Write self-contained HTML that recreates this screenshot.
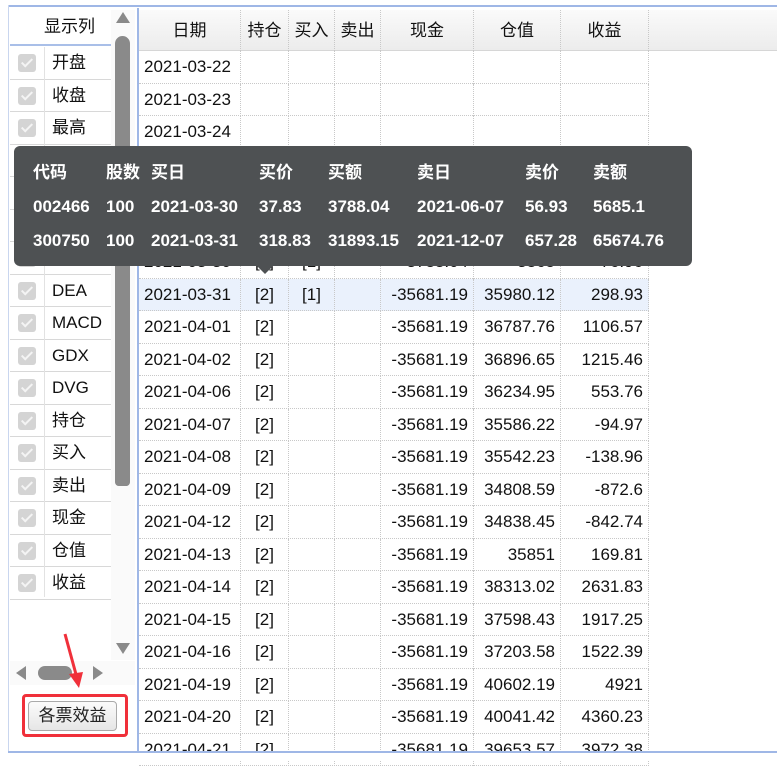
<!DOCTYPE html>
<html><head><meta charset="utf-8"><style>
*{box-sizing:border-box;margin:0;padding:0}
body{width:777px;height:760px;overflow:hidden;background:#fff;font-family:"Liberation Sans","Noto Sans CJK SC",sans-serif;font-size:17px;color:#111;position:relative}
.abs{position:absolute}
.hdr{position:absolute;top:10px;left:139px;width:638px;height:41px;background:linear-gradient(#fafafa,#ececec);border-bottom:1px solid #d6d6d6}
.hc{position:absolute;top:10px;height:41px;line-height:41px;text-align:center;border-right:1px dotted #c8c8c8}
.row{position:absolute;left:139px;width:510px;height:32.5px;border-bottom:1px dotted #c8c8c8}
.c{position:absolute;top:0;height:32.5px;line-height:32px;border-right:1px dotted #c8c8c8;white-space:nowrap;padding:0 5px}
.r{text-align:right}.m{text-align:center}
.lr{position:absolute;left:10px;width:101px;height:32.5px;border-bottom:1px solid #d8d8d8}
.cb{position:absolute;left:8px;top:7px;width:18px;height:18px;background:#d4d4d4;border-radius:3px}
.cb:after{content:"";position:absolute;left:6px;top:2px;width:4px;height:9px;border:solid #f4f4f4;border-width:0 2px 2px 0;transform:rotate(45deg)}
.lt{position:absolute;left:42px;top:0;line-height:32px}
.tip{position:absolute;left:14px;top:146px;width:678px;height:120px;background:#4e5153;border-radius:6px;color:#fff;font-weight:bold;font-size:17px}
.tip span{position:absolute;white-space:nowrap;line-height:20px;height:20px}
</style></head><body>
<div class="abs" style="left:8px;top:5px;width:769px;height:2px;background:#9fb7e6"></div>
<div class="abs" style="left:137px;top:8px;width:2px;height:746px;background:#9fb7e6"></div>
<div class="abs" style="left:8px;top:5px;width:1px;height:748px;background:#c9d6ef"></div>

<div class="hdr"></div>
<div class="hc" style="left:139px;width:102px">日期</div>
<div class="hc" style="left:241px;width:48px">持仓</div>
<div class="hc" style="left:289px;width:46px">买入</div>
<div class="hc" style="left:335px;width:46px">卖出</div>
<div class="hc" style="left:381px;width:93px">现金</div>
<div class="hc" style="left:474px;width:87px">仓值</div>
<div class="hc" style="left:561px;width:88px">收益</div>

<div id="rows"></div>
<script>
var d=[["2021-03-22"],["2021-03-23"],["2021-03-24"],["2021-03-25"],["2021-03-26"],["2021-03-29"],["2021-03-30","[2]","[1]","","-3788.04","3865","76.96"],["2021-03-31","[2]","[1]","","-35681.19","35980.12","298.93"],
["2021-04-01","[2]","","","-35681.19","36787.76","1106.57"],["2021-04-02","[2]","","","-35681.19","36896.65","1215.46"],["2021-04-06","[2]","","","-35681.19","36234.95","553.76"],["2021-04-07","[2]","","","-35681.19","35586.22","-94.97"],["2021-04-08","[2]","","","-35681.19","35542.23","-138.96"],["2021-04-09","[2]","","","-35681.19","34808.59","-872.6"],["2021-04-12","[2]","","","-35681.19","34838.45","-842.74"],["2021-04-13","[2]","","","-35681.19","35851","169.81"],["2021-04-14","[2]","","","-35681.19","38313.02","2631.83"],["2021-04-15","[2]","","","-35681.19","37598.43","1917.25"],["2021-04-16","[2]","","","-35681.19","37203.58","1522.39"],["2021-04-19","[2]","","","-35681.19","40602.19","4921"],["2021-04-20","[2]","","","-35681.19","40041.42","4360.23"],["2021-04-21","[2]","","","-35681.19","39653.57","3972.38"]];
var cols=[[0,102,""],[102,48,"m"],[150,46,"m"],[196,46,"m"],[242,93,"r"],[335,87,"r"],[422,88,"r"]];
var h="";
for(var i=0;i<d.length;i++){var t=51+i*32.5;if(t>752)break;
h+='<div class="row" style="top:'+t+'px;'+(i==7?'background:#eaf1fc':'')+'">';
for(var j=0;j<7;j++){h+='<div class="c '+cols[j][2]+'" style="left:'+cols[j][0]+'px;width:'+cols[j][1]+'px">'+(d[i][j]||"")+'</div>';}
h+='</div>';}
document.getElementById("rows").innerHTML=h;
</script>
<div class="abs" style="left:0;top:753px;width:777px;height:7px;background:#fff"></div>
<div class="abs" style="left:8px;top:751px;width:769px;height:2px;background:#9fb7e6"></div>

<!-- left panel -->
<div class="abs" style="left:9px;top:8px;width:128px;height:743px;background:#fff"></div>
<div class="abs" style="left:10px;top:10px;width:101px;height:36px;line-height:34px;border-bottom:2px solid #a9bfe8"><span style="position:absolute;left:34px">显示列</span></div>
<div id="lp"></div>
<script>
var n=["开盘","收盘","最高","最低","成交量","MA","DIF","DEA","MACD","GDX","DVG","持仓","买入","卖出","现金","仓值","收益"];var s="";
for(var i=0;i<n.length;i++){s+='<div class="lr" style="top:'+(47+i*32.5)+'px"><div class="cb"></div><div class="lt">'+n[i]+'</div></div>';}
document.getElementById("lp").innerHTML=s;
</script>
<div class="abs" style="left:44px;top:47px;width:1px;height:550px;background:#e2e2e2"></div>
<div class="abs" style="left:111px;top:10px;width:24px;height:650px;background:#fafafa"></div>
<div class="abs" style="left:116px;top:12px;width:0;height:0;border-left:7px solid transparent;border-right:7px solid transparent;border-bottom:11px solid #8a8a8a"></div>
<div class="abs" style="left:115px;top:36px;width:15px;height:450px;background:#8a8a8a;border-radius:8px 8px 4px 4px"></div>
<div class="abs" style="left:116px;top:643px;width:0;height:0;border-left:7px solid transparent;border-right:7px solid transparent;border-top:11px solid #8a8a8a"></div>
<div class="abs" style="left:10px;top:661px;width:125px;height:24px;background:#fafafa"></div>
<div class="abs" style="left:16px;top:666px;width:0;height:0;border-top:7px solid transparent;border-bottom:7px solid transparent;border-right:10px solid #8a8a8a"></div>
<div class="abs" style="left:38px;top:666px;width:34px;height:14px;background:#8a8a8a;border-radius:7px"></div>
<div class="abs" style="left:93px;top:666px;width:0;height:0;border-top:7px solid transparent;border-bottom:7px solid transparent;border-left:10px solid #8a8a8a"></div>
<div class="abs" style="left:22px;top:694px;width:106px;height:43px;border:3px solid #f0303a;border-radius:4px"></div>
<div class="abs" style="left:28px;top:701px;width:89px;height:30px;border:1px solid #aaa;border-radius:4px;background:linear-gradient(#fbfbfb,#e6e6e6);text-align:center;line-height:28px;color:#222">各票效益</div>
<svg class="abs" style="left:55px;top:630px" width="30" height="60"><line x1="10" y1="4" x2="22" y2="48" stroke="#f0303a" stroke-width="3"/><polygon points="14,44 28,42 24,58" fill="#f0303a"/></svg>

<!-- tooltip -->
<div class="tip">
<span style="left:19px;top:17px">代码</span><span style="left:92px;top:17px">股数</span><span style="left:137px;top:17px">买日</span><span style="left:245px;top:17px">买价</span><span style="left:314px;top:17px">买额</span><span style="left:403px;top:17px">卖日</span><span style="left:511px;top:17px">卖价</span><span style="left:579px;top:17px">卖额</span>
<span style="left:19px;top:51px">002466</span><span style="left:92px;top:51px">100</span><span style="left:137px;top:51px">2021-03-30</span><span style="left:245px;top:51px">37.83</span><span style="left:314px;top:51px">3788.04</span><span style="left:403px;top:51px">2021-06-07</span><span style="left:511px;top:51px">56.93</span><span style="left:579px;top:51px">5685.1</span>
<span style="left:19px;top:85px">300750</span><span style="left:92px;top:85px">100</span><span style="left:137px;top:85px">2021-03-31</span><span style="left:245px;top:85px">318.83</span><span style="left:314px;top:85px">31893.15</span><span style="left:403px;top:85px">2021-12-07</span><span style="left:511px;top:85px">657.28</span><span style="left:579px;top:85px">65674.76</span>
</div>
<div class="abs" style="left:257px;top:266px;width:0;height:0;border-left:8px solid transparent;border-right:8px solid transparent;border-top:8px solid #4e5153"></div>
</body></html>
